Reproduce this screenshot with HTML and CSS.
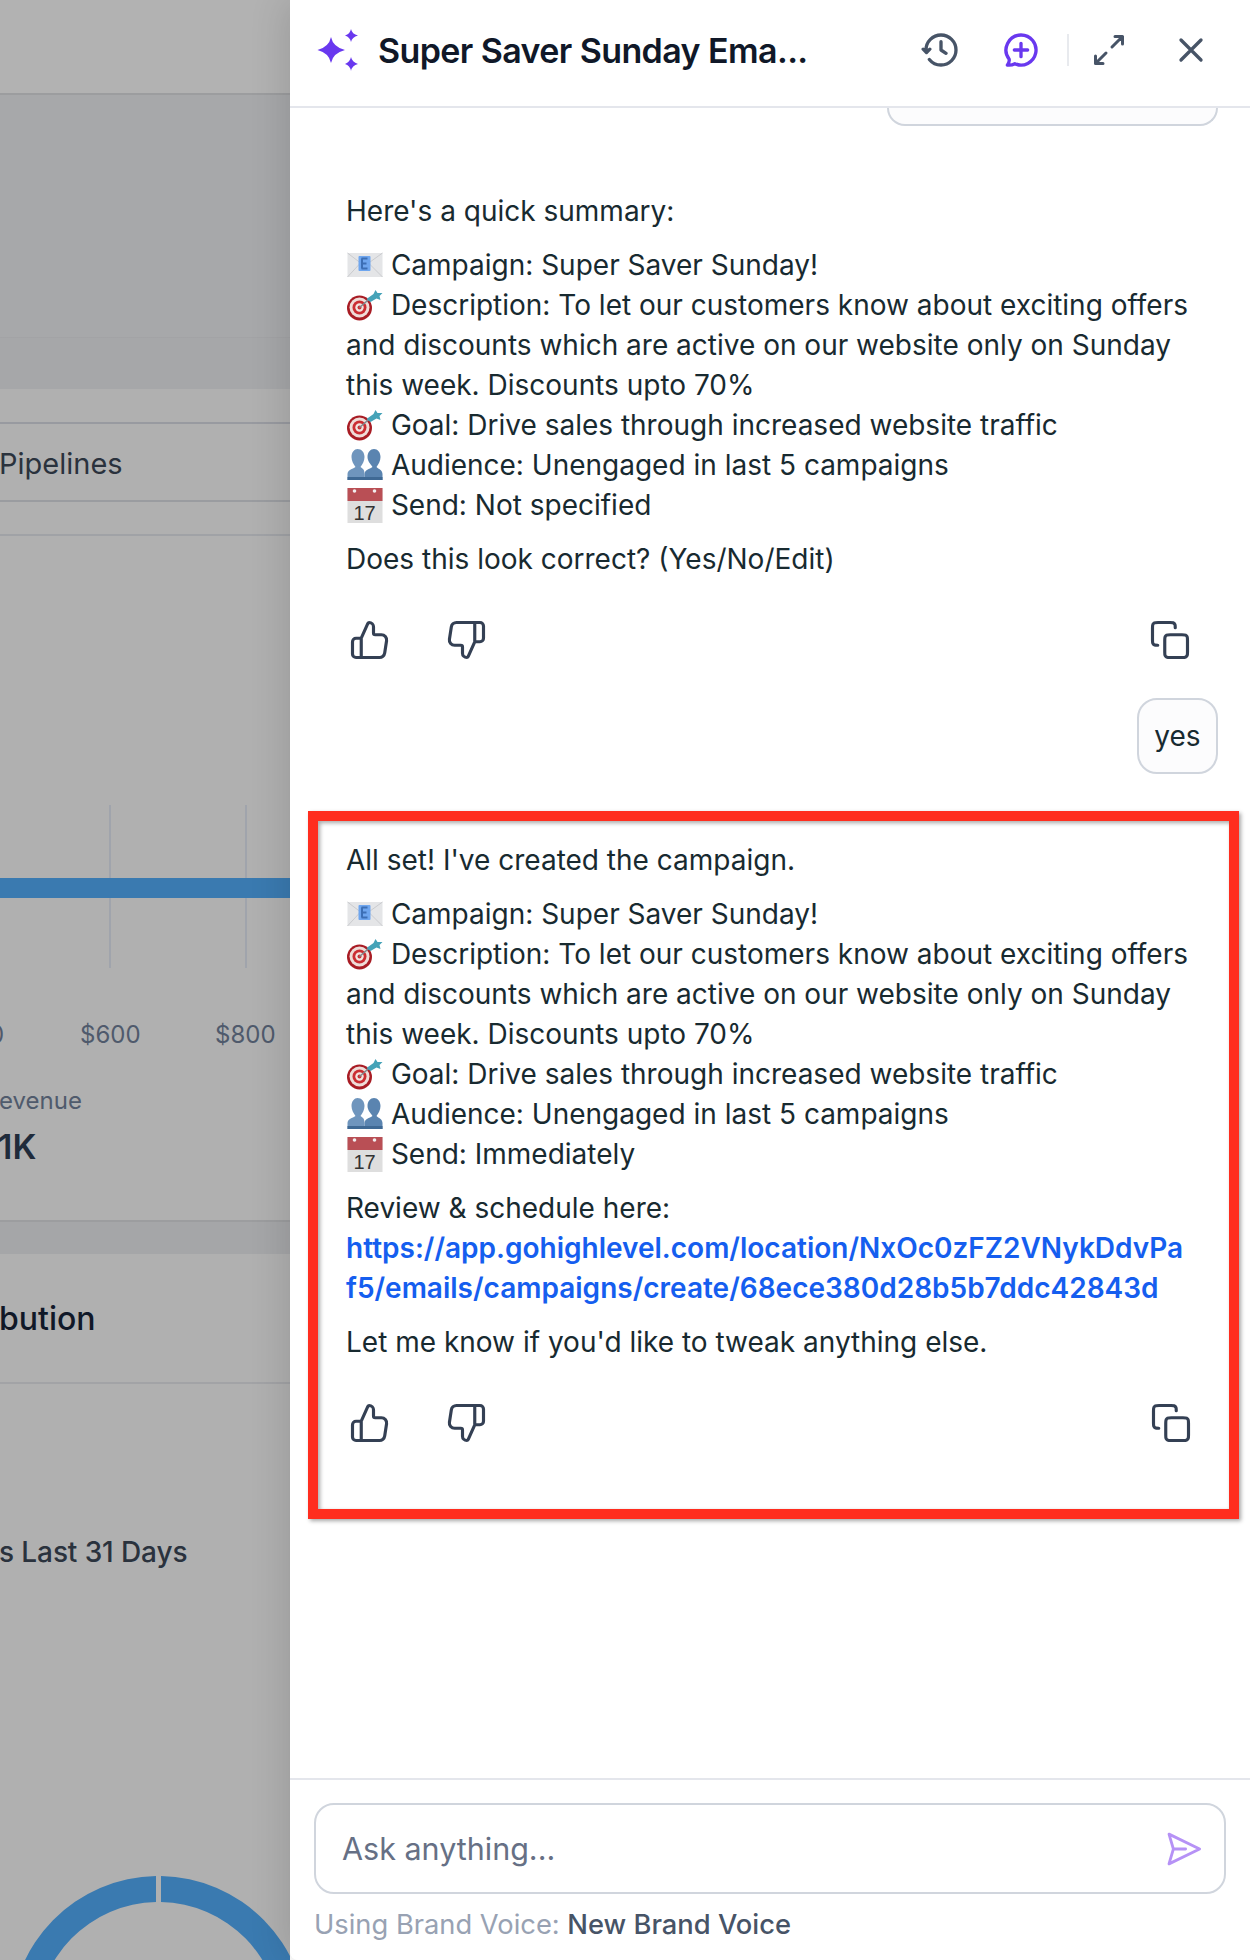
FILE: index.html
```html
<!DOCTYPE html>
<html>
<head>
<title>Super Saver Sunday Email</title>
<link rel="stylesheet" href="styles.css">
</head>
<body>
<svg class="defs" width="0" height="0">
	<symbol id="ic-up" viewBox="0 0 24 24"><path d="M7 22V11M2 13V20C2 21.1 2.9 22 4 22H17.43C18.9 22 20.17 20.92 20.39 19.46L21.47 12.46C21.75 10.64 20.34 9 18.5 9H15C14.45 9 14 8.55 14 8V4.47C14 3.1 12.9 2 11.53 2C11.21 2 10.92 2.19 10.78 2.49L7.26 10.41C7.1 10.77 6.75 11 6.35 11H4C2.9 11 2 11.9 2 13Z"/></symbol>
	<symbol id="ic-down" viewBox="0 0 24 24"><path transform="rotate(180 12 12)" d="M7 22V11M2 13V20C2 21.1 2.9 22 4 22H17.43C18.9 22 20.17 20.92 20.39 19.46L21.47 12.46C21.75 10.64 20.34 9 18.5 9H15C14.45 9 14 8.55 14 8V4.47C14 3.1 12.9 2 11.53 2C11.21 2 10.92 2.19 10.78 2.49L7.26 10.41C7.1 10.77 6.75 11 6.35 11H4C2.9 11 2 11.9 2 13Z"/></symbol>
	<symbol id="ic-copy" viewBox="0 0 24 24"><path d="M5 15C4.07 15 3.6 15 3.23 14.85C2.74 14.64 2.36 14.26 2.15 13.77C2 13.4 2 12.93 2 12V5.2C2 4.08 2 3.52 2.22 3.09C2.41 2.72 2.72 2.41 3.09 2.22C3.52 2 4.08 2 5.2 2H12C12.93 2 13.4 2 13.77 2.15C14.26 2.36 14.64 2.74 14.85 3.23C15 3.6 15 4.07 15 5M12.2 22H18.8C19.92 22 20.48 22 20.91 21.78C21.28 21.59 21.59 21.28 21.78 20.91C22 20.48 22 19.92 22 18.8V12.2C22 11.08 22 10.52 21.78 10.09C21.59 9.72 21.28 9.41 20.91 9.22C20.48 9 19.92 9 18.8 9H12.2C11.08 9 10.52 9 10.09 9.22C9.72 9.41 9.41 9.72 9.22 10.09C9 10.52 9 11.08 9 12.2V18.8C9 19.92 9 20.48 9.22 20.91C9.41 21.28 9.72 21.59 10.09 21.78C10.52 22 11.08 22 12.2 22Z"/></symbol>
	<symbol id="em-mail" viewBox="0 0 36 36">
		<rect x="1" y="6" width="35" height="24" fill="#e4e5e7"/>
		<path d="M1 6L18 19L36 6M1 30L13 17M36 30L23 17" fill="none" stroke="#cacbce" stroke-width="1"/>
		<rect x="12" y="9" width="12" height="15" rx="1" fill="#6ea6ef"/>
		<path d="M15 11.500h6M15 16.500h5M15 21.500h6M15.500 11.500v10" fill="none" stroke="#3c6fb5" stroke-width="2"/>
	</symbol>
	<symbol id="em-target" viewBox="0 0 36 36">
		<circle cx="13" cy="21" r="12.500" fill="#a81c24"/>
		<circle cx="13" cy="20.500" r="10" fill="#efdcd8"/>
		<circle cx="13" cy="20.500" r="7" fill="#cb2d33"/>
		<circle cx="13" cy="20.500" r="4.200" fill="#f2e4e0"/>
		<circle cx="13" cy="20.500" r="2" fill="#cb2d33"/>
		<path d="M13 20.500L24 11" stroke="#7c8a90" stroke-width="1.500"/>
		<path d="M20 12L27 7L29 3L31 6L36 6L33 9L34 13L30 11.500L24 15Z" fill="#45a3b8"/>
	</symbol>
	<symbol id="em-people" viewBox="0 0 36 36">
		<path d="M1 33V27C1 23 6 22 9 20C7 17 5 14 5 10C5 5 8 2 11 2C15 2 18 5 18 10C18 14 16 17 14 20C17 22 18 23 18 27V33Z" fill="#6f95bd"/>
		<path d="M18 33V27C18 23 23 22 26 20C24 17 21 14 21 10C21 5 24 2 27.500 2C31 2 34 5 34 10C34 14 32 17 30 20C32 22 36 23 36 27V33Z" fill="#5a84b0"/>
		<rect x="1" y="30" width="35" height="3" fill="#3f6994"/>
	</symbol>
	<symbol id="em-cal" viewBox="0 0 36 36">
		<rect x="1" y="1" width="35" height="35" fill="#dedede"/>
		<rect x="1" y="1" width="35" height="13" fill="#b94f55"/>
		<circle cx="8" cy="4" r="1.800" fill="#f1eeee"/>
		<circle cx="28" cy="4" r="1.800" fill="#f1eeee"/>
		<text x="18" y="33" text-anchor="middle" font-family="Liberation Sans" font-size="20" fill="#333">17</text>
	</symbol>
</svg>

<div class="page">
	<div class="dash">
		<div class="dash_top"></div>
		<div class="dash_dark"></div>
		<div class="tabs"><span class="tab_name">Pipelines</span></div>
		<div class="rule"></div>
		<div class="chart">
			<div class="grid_line first"></div>
			<div class="grid_line second"></div>
			<div class="bar"></div>
		</div>
		<div class="axis">
			<span class="tick_cut">0</span>
			<span class="tick_a">$600</span>
			<span class="tick_b">$800</span>
		</div>
		<div class="rev_label">evenue</div>
		<div class="rev_value">1K</div>
		<div class="dash_strip"></div>
		<div class="dash_title">bution</div>
		<div class="dash_sub">s Last 31 Days</div>
		<svg class="donut" width="290" height="84" viewBox="0 0 290 84">
			<path d="M156 0.020A148 148 0 0 0 10.500 148H36.500A122 122 0 0 1 156 26Z" fill="#3a7ab0"/>
			<path d="M161 0.020A148 148 0 0 1 306.500 148H280.500A122 122 0 0 0 161 26Z" fill="#3a7ab0"/>
		</svg>
	</div>

	<div class="panel">
		<div class="panel_head">
			<svg class="spark" width="42" height="42" viewBox="0 0 42 42">
				<path d="M14 8Q16 18 28 21Q16 24 14 34Q12 24 0.500 21Q12 18 14 8Z"/>
				<path d="M34 0Q35 5 41 6.500Q35 8 34 13Q33 8 28 6.500Q33 5 34 0Z"/>
				<path d="M34 28Q35 33 41 35Q35 36.500 34 42Q33 36.500 28 35Q33 33 34 28Z"/>
			</svg>
			<div class="panel_title">Super Saver Sunday Ema...</div>
			<div class="head_icons">
				<svg class="head_ic" width="40" height="40" viewBox="0 0 24 24"><path d="M1.300 11.500L3.300 13.500L5.300 11.500M3.050 13C3.020 12.670 3 12.340 3 12C3 7.030 7.030 3 12 3C16.970 3 21 7.030 21 12C21 16.970 16.970 21 12 21C9.170 21 6.650 19.700 5 17.660M12 7V12L15 14"/></svg>
				<svg class="head_ic new_chat" width="40" height="40" viewBox="0 0 24 24"><path d="M12 3A9 9 0 1 1 8.300 20.200C7 20.900 5.500 21.200 3.800 21C4.800 19.900 5.100 18.700 4.900 17.500A9 9 0 0 1 12 3ZM12 8V16M8 12H16"/></svg>
				<div class="head_div"></div>
				<svg class="head_ic thin" width="36" height="36" viewBox="0 0 24 24"><path d="M14 10L21 3M21 3H16M21 3V8M10 14L3 21M3 21H8M3 21V16"/></svg>
				<svg class="head_ic" width="40" height="40" viewBox="0 0 24 24"><path d="M18 6L6 18M6 6L18 18"/></svg>
			</div>
		</div>

		<div class="chat">
			<div class="stub"></div>

			<div class="msg first_msg">
				<p>Here's a quick summary:</p>
				<p><svg class="emoji"><use href="#em-mail"/></svg> Campaign: Super Saver Sunday!<br>
				<svg class="emoji"><use href="#em-target"/></svg> Description: To let our customers know about exciting offers and discounts which are active on our website only on Sunday this week. Discounts upto 70%<br>
				<svg class="emoji"><use href="#em-target"/></svg> Goal: Drive sales through increased website traffic<br>
				<svg class="emoji"><use href="#em-people"/></svg> Audience: Unengaged in last 5 campaigns<br>
				<svg class="emoji"><use href="#em-cal"/></svg> Send: Not specified</p>
				<p>Does this look correct? (Yes/No/Edit)</p>
				<div class="actions">
					<svg class="act"><use href="#ic-up"/></svg>
					<svg class="act"><use href="#ic-down"/></svg>
					<svg class="act copy"><use href="#ic-copy"/></svg>
				</div>
			</div>

			<div class="bubble">yes</div>

			<div class="msg highlight">
				<p>All set! I've created the campaign.</p>
				<p><svg class="emoji"><use href="#em-mail"/></svg> Campaign: Super Saver Sunday!<br>
				<svg class="emoji"><use href="#em-target"/></svg> Description: To let our customers know about exciting offers and discounts which are active on our website only on Sunday this week. Discounts upto 70%<br>
				<svg class="emoji"><use href="#em-target"/></svg> Goal: Drive sales through increased website traffic<br>
				<svg class="emoji"><use href="#em-people"/></svg> Audience: Unengaged in last 5 campaigns<br>
				<svg class="emoji"><use href="#em-cal"/></svg> Send: Immediately</p>
				<p>Review &amp; schedule here:<br>
				<a class="link" href="#">https://app.gohighlevel.com/location/NxOc0zFZ2VNykDdvPaf5/emails/campaigns/create/68ece380d28b5b7ddc42843d</a></p>
				<p>Let me know if you'd like to tweak anything else.</p>
				<div class="actions">
					<svg class="act"><use href="#ic-up"/></svg>
					<svg class="act"><use href="#ic-down"/></svg>
					<svg class="act copy"><use href="#ic-copy"/></svg>
				</div>
			</div>
		</div>

		<div class="panel_foot">
			<div class="ask">
				<span class="ask_text">Ask anything...</span>
				<svg class="send" width="42" height="42" viewBox="0 0 24 24"><path d="M4 3.500L21.500 12L4 20.500L6.500 12ZM6.500 12H13.500"/></svg>
			</div>
			<div class="voice">Using Brand Voice: <b>New Brand Voice</b></div>
		</div>
	</div>
</div>
</body>
</html>
```

FILE: styles.css
```css
html, body {
	margin: 0;
	padding: 0;
}
body {
	font-family: "Inter", "Liberation Sans", sans-serif;
	background: #fff;
}
.defs {
	position: absolute;
}
.page {
	display: flex;
	height: 1960px;
	overflow: hidden;
}

/* dimmed dashboard behind the panel */
.dash {
	width: 290px;
	flex: none;
	background: #b0b0b0;
	overflow: hidden;
	color: #2a323d;
}
.dash_top {
	height: 93px;
	background: #b2b2b2;
	border-bottom: 2px solid #9c9d9f;
}
.dash_dark {
	height: 294px;
	background: linear-gradient(#a7a8aa 0, #a7a8aa 242px, #9f9fa2 242px, #a6a7a9 243px);
}
.tabs {
	margin-top: 33px;
	height: 76px;
	border-top: 2px solid #989aa0;
	border-bottom: 2px solid #9a9ca0;
	line-height: 80px;
	font-size: 29px;
}
.tab_name {
	display: block;
	margin-left: -1px;
}
.rule {
	margin-top: 32px;
	height: 2px;
	background: #a0a2a6;
}
.chart {
	position: relative;
	margin-top: 269px;
	height: 163px;
}
.grid_line {
	position: absolute;
	top: 0;
	bottom: 0;
	width: 2px;
	background: #a0a4ac;
}
.first {
	left: 109px;
}
.second {
	left: 245px;
}
.bar {
	position: absolute;
	left: 0;
	right: 0;
	top: 73px;
	height: 20px;
	background: #3a7ab0;
}
.axis {
	position: relative;
	height: 30px;
	margin-top: 52px;
	font-size: 24px;
	line-height: 30px;
	color: #4f5a6c;
}
.axis span {
	position: absolute;
	top: 0;
}
.tick_cut {
	left: -11px;
}
.tick_a {
	left: 80px;
}
.tick_b {
	left: 215px;
}
.rev_label {
	margin-top: 36px;
	margin-left: -1px;
	height: 30px;
	font-size: 24px;
	line-height: 30px;
	color: #4f5a6c;
}
.rev_value {
	margin-top: 11px;
	margin-left: -2px;
	height: 40px;
	font-size: 34px;
	line-height: 40px;
	font-weight: 600;
	color: #1f2b3b;
}
.dash_strip {
	margin-top: 53px;
	height: 32px;
	background: #a5a6a8;
	border-top: 2px solid #9c9d9f;
}
.dash_title {
	height: 128px;
	line-height: 130px;
	margin-left: -1px;
	font-size: 32px;
	font-weight: 500;
	color: #101828;
	border-bottom: 2px solid #a2a3a6;
}
.dash_sub {
	margin-top: 148px;
	margin-left: -1px;
	height: 40px;
	line-height: 40px;
	font-size: 28px;
	font-weight: 500;
	letter-spacing: -0.1px;
}
.donut {
	display: block;
	margin-top: 304px;
}

/* assistant panel */
.panel {
	flex: 1;
	min-width: 0;
	display: flex;
	flex-direction: column;
	background: #fff;
	border-bottom-left-radius: 8px;
	box-shadow: -6px 0 36px rgba(0, 0, 0, 0.12);
	z-index: 1;
	color: #182a30;
}
.panel_head {
	height: 100px;
	flex: none;
	display: flex;
	align-items: center;
	padding-left: 27px;
	padding-bottom: 6px;
	border-bottom: 2px solid #e4e6ec;
}
.spark {
	fill: #6938ef;
	flex: none;
}
.panel_title {
	margin-left: 19px;
	font-size: 34px;
	font-weight: 600;
	color: #101828;
	white-space: nowrap;
	letter-spacing: -0.6px;
}
.head_icons {
	margin-left: auto;
	margin-right: 39px;
	display: flex;
	align-items: center;
}
.head_ic {
	fill: none;
	stroke: #475467;
	stroke-width: 2;
	stroke-linecap: round;
	stroke-linejoin: round;
	margin-left: 40px;
}
.new_chat {
	stroke: #6938ef;
}
.thin {
	margin-left: 22px;
	margin-right: 4px;
}
.head_div {
	width: 2px;
	height: 32px;
	margin-left: 26px;
	background: #e8eaee;
}
.chat {
	flex: 1;
	min-height: 0;
	overflow: hidden;
}
.stub {
	width: 327px;
	height: 16px;
	margin-left: auto;
	margin-right: 32px;
	background: #fcfcfd;
	border: 2px solid #d0d5dd;
	border-top: 0;
	border-radius: 0 0 20px 20px;
}
.msg {
	font-size: 28px;
	line-height: 40px;
}
.msg p {
	margin: 0 0 14px 0;
}
.first_msg {
	padding: 65px 59px 0 56px;
}
.emoji {
	width: 37px;
	height: 36px;
	vertical-align: -8px;
}
.actions {
	display: flex;
	margin-top: 39px;
	margin-left: 3px;
	height: 44px;
	align-items: center;
}
.act {
	width: 42px;
	height: 42px;
	fill: none;
	stroke: #344054;
	stroke-width: 1.800;
	stroke-linecap: round;
	stroke-linejoin: round;
	margin-right: 54px;
}
.act.copy {
	margin-left: auto;
	margin-right: 0;
}
.bubble {
	width: 77px;
	height: 72px;
	margin-top: 36px;
	margin-left: auto;
	margin-right: 32px;
	border: 2px solid #d0d5dd;
	border-radius: 20px;
	background: #fcfcfd;
	font-size: 28px;
	line-height: 72px;
	text-align: center;
}
.highlight {
	margin: 37px 11px 0 18px;
	padding: 19px 37px 64px 28px;
	border: 10px solid #ff2d1e;
	box-shadow: 2px 2px 4px rgba(0, 0, 0, 0.35), inset 2px 2px 4px rgba(0, 0, 0, 0.35);
}
.link {
	color: #155eef;
	font-weight: 600;
	text-decoration: none;
	word-break: break-all;
}
.panel_foot {
	height: 157px;
	flex: none;
	padding: 23px 24px 0 24px;
	border-top: 2px solid #e4e6ec;
}
.ask {
	height: 87px;
	display: flex;
	align-items: center;
	padding: 0 20px 0 26px;
	border: 2px solid #d0d5dd;
	border-radius: 20px;
}
.ask_text {
	font-size: 30.500px;
	color: #667085;
}
.send {
	margin-left: auto;
	fill: none;
	stroke: #b692f6;
	stroke-width: 1.600;
	stroke-linecap: round;
	stroke-linejoin: round;
}
.voice {
	margin-top: 13px;
	font-size: 27.300px;
	line-height: 36px;
	color: #98a2b3;
}
.voice b {
	font-weight: 500;
	color: #475467;
}
```
